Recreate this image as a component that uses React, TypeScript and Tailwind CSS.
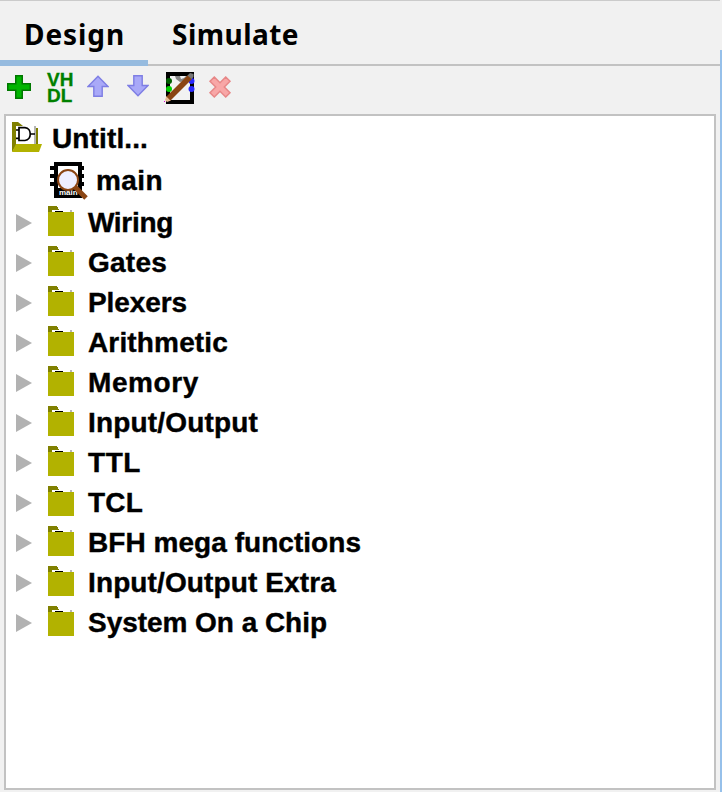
import React from "react";

const libraries: { name: string; width: number }[] = [
  { name: "Wiring", width: 83 },
  { name: "Gates", width: 77 },
  { name: "Plexers", width: 97 },
  { name: "Arithmetic", width: 138 },
  { name: "Memory", width: 109 },
  { name: "Input/Output", width: 168 },
  { name: "TTL", width: 51 },
  { name: "TCL", width: 53 },
  { name: "BFH mega functions", width: 271 },
  { name: "Input/Output Extra", width: 246 },
  { name: "System On a Chip", width: 237 },
];

function PlusIcon() {
  return (
    <svg width="24" height="24" className="shrink-0">
      <path d="M8.75 .75h6.5v8h8v6.5h-8v8h-6.5v-8h-8v-6.5h8z" fill="#00b500" stroke="#007800" strokeWidth="1.5" />
    </svg>
  );
}

function ArrowIcon({ down = false }: { down?: boolean }) {
  return (
    <svg width="22" height="22" className={down ? "shrink-0 rotate-180" : "shrink-0"}>
      <path d="M11 1.2 21 11.5H15.2V21.2H6.8V11.5H1z" fill="#a9a9f8" stroke="#7e7ee4" strokeWidth="1.4" />
    </svg>
  );
}

function EditIcon() {
  return (
    <svg width="32" height="34" className="shrink-0">
      <path d="M2 1h28v32H2z" />
      <path d="M6 5h20v24H6z" fill="#f2f2f2" />
      <path d="M11 5h5l1 3 3-1 2-2h2l-3 5-5 1-4-3z" fill="#858585" />
      <circle cx="5" cy="10" r="3" fill="#006000" />
      <circle cx="5" cy="18" r="3" fill="#00d000" />
      <circle cx="27.5" cy="10" r="3" fill="#2929ff" />
      <circle cx="27.5" cy="18" r="3" fill="#2929ff" />
      <path d="M2.5 25 7 29.5 3 31 1 29z" fill="#e8bd95" />
      <path d="M2.5 25.5 24 4l4 4L6.5 29.5z" fill="#8b4513" />
      <path d="m23.5 4.5 2.5-2.5 3.5 1v3L27.5 8z" fill="#777" />
      <path d="M0 30h1v1H0z" fill="#e000d0" />
    </svg>
  );
}

function DeleteIcon() {
  return (
    <svg width="24" height="24" className="shrink-0">
      <path d="m6.3 2 5.7 5.7L17.7 2 22 6.3 16.3 12l5.7 5.7-4.3 4.3-5.7-5.7L6.3 22 2 17.7 7.7 12 2 6.3z" fill="#f8a7a7" stroke="#e78787" strokeWidth="1.5" />
    </svg>
  );
}

function ProjectIcon() {
  return (
    <svg width="30" height="30" className="-mt-px shrink-0">
      <path d="M0 0h6l5 4h11v20H4L0 30z" fill="#808000" />
      <path d="M4 4h18v18H4z" fill="white" />
      <path d="M22 4h2v18h-2z" fill="#b5b5b5" />
      <path d="M24 6h2v16h-2z" fill="#808000" />
      <path d="M4 22h26l-3 8H0z" fill="#b2b200" />
      <path d="M7 5.7h6c7 .5 7 12.3 0 12.8H7zM4 8h3M4 16.3h3M19 12h4" fill="none" stroke="black" strokeWidth="1.7" />
    </svg>
  );
}

function MainIcon() {
  return (
    <svg width="38" height="38" className="shrink-0">
      <path d="M4 0h28v36H4zM0 4h34v4H0zM0 12h34v4H0zM0 20h34v4H0z" />
      <path d="M8 4h20v22H8z" fill="white" />
      <text x="9" y="33" fontSize="8" fontWeight="bold" fill="white" fontFamily="Liberation Sans, sans-serif">main</text>
      <path d="m24.5 24.5 11.5 11.5" stroke="#8b4513" strokeWidth="5" />
      <circle cx="18" cy="18" r="10" fill="#eeeeff" stroke="#8b4513" strokeWidth="2" />
    </svg>
  );
}

function FolderIcon() {
  return (
    <svg width="26" height="30" className="-mt-[2px] shrink-0" shapeRendering="crispEdges">
      <path d="M0 0h8l2 2 1 2H4v2H0z" fill="#808000" />
      <path d="M4 4h18v2H4z" fill="white" />
      <path d="M7 5h8v1H7z" />
      <path d="M22 4h2v2h-2z" fill="#b5b5b5" />
      <path d="M0 6h26v24H0z" fill="#b2b200" />
    </svg>
  );
}

function Label({ text, width, className }: { text: string; width: number; className: string }) {
  const ref = React.useRef<HTMLSpanElement>(null);
  React.useLayoutEffect(() => {
    const el = ref.current;
    if (!el) return;
    el.style.letterSpacing = "0px";
    const natural = el.getBoundingClientRect().width;
    el.style.letterSpacing = `${(width + 2 - natural) / text.length}px`;
  }, [text, width]);
  return <span ref={ref} className={`whitespace-nowrap ${className}`}>{text}</span>;
}

const treeFont = "block pt-px font-['Liberation_Sans',Arial,sans-serif] text-[28px] font-bold leading-10 [-webkit-text-stroke:0.4px_black]";
const tabFont = "font-['Noto_Sans',sans-serif] text-[28px] font-bold leading-[60px]";

export default function App() {
  return (
    <div className="flex h-[792px] w-[722px] overflow-hidden bg-[#f1f1f1] text-black">
      <main className="flex w-[720px] flex-col">
        <nav className="flex h-[66px] shrink-0 border-t border-b-2 border-t-[#cbcbcb] border-b-[#c2c2c2]">
          <div className="-mb-0.5 flex h-[65px] w-[148px] border-b-[6px] border-[#96bbdf] pl-6 pt-[3px]">
            <Label text="Design" width={99} className={tabFont} />
          </div>
          <div className="pl-6 pt-[3px]">
            <Label text="Simulate" width={125} className={tabFont} />
          </div>
        </nav>
        <div className="flex h-12 shrink-0 items-start pl-[7px] pt-[9px]">
          <PlusIcon />
          <div className="ml-4 -mt-[3px] w-[29px] font-['Liberation_Sans',Arial,sans-serif] text-[19px] font-bold leading-4 text-[#008000] [-webkit-text-stroke:0.3px_#008000]">
            VH<br />DL
          </div>
          <div className="ml-[11px]"><ArrowIcon /></div>
          <div className="ml-[18px]"><ArrowIcon down /></div>
          <div className="ml-[15px] -mt-1"><EditIcon /></div>
          <div className="ml-3"><DeleteIcon /></div>
        </div>
        <section className="ml-1 mr-1 h-[676px] border-2 border-[#c2c2c2] bg-white">
          <div className="mt-px flex h-[41px] items-center pl-[6px]">
            <ProjectIcon />
            <div className="ml-[10px] mt-px"><Label text="Untitl..." width={94} className={treeFont} /></div>
          </div>
          <div className="mt-[3px] flex h-10 items-center pl-[44px]">
            <MainIcon />
            <div className="ml-2 -mt-[2px]"><Label text="main" width={65} className={treeFont} /></div>
          </div>
          <div className="mt-px">
            {libraries.map((lib) => (
              <div key={lib.name} className="flex h-10 items-center pl-[10px]">
                <svg width="16" height="18" className="mt-[2px] shrink-0"><path d="M0 0 16 9 0 18z" fill="#b2b2b2" /></svg>
                <div className="ml-4"><FolderIcon /></div>
                <div className="ml-[14px]"><Label text={lib.name} width={lib.width} className={treeFont} /></div>
              </div>
            ))}
          </div>
        </section>
      </main>
      <div className="mt-[50px] w-0.5 bg-[#96c0ea]" />
    </div>
  );
}
